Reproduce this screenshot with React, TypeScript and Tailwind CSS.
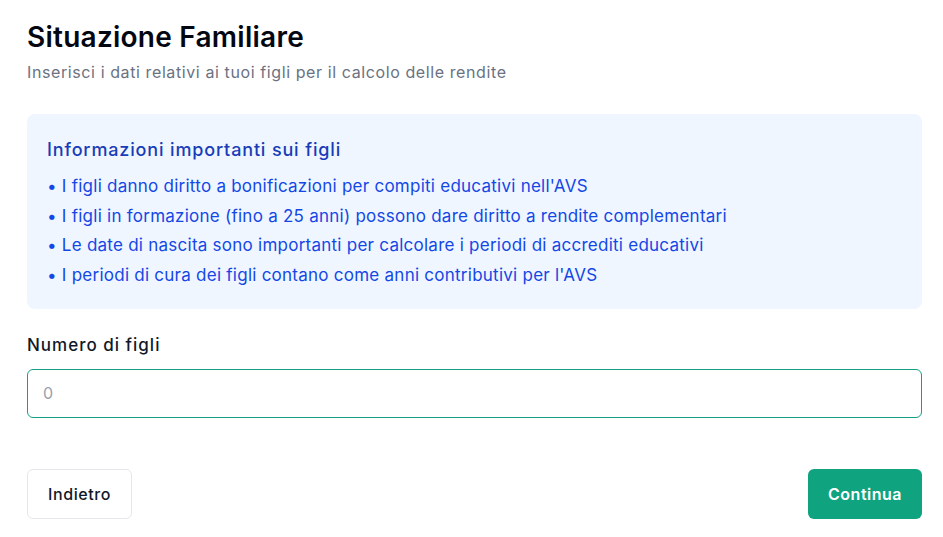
import { useState } from 'react';

const infos = [
  "I figli danno diritto a bonificazioni per compiti educativi nell'AVS",
  'I figli in formazione (fino a 25 anni) possono dare diritto a rendite complementari',
  'Le date di nascita sono importanti per calcolare i periodi di accrediti educativi',
  "I periodi di cura dei figli contano come anni contributivi per l'AVS",
];

const App = () => {
  const [children, setChildren] = useState('');

  return (
    <div
      className="min-h-screen bg-white pl-[27px] pr-[21px] pt-[19px]"
      style={{ fontFamily: 'Inter, "Noto Sans", sans-serif' }}
    >
      <h1 className="text-[28px] leading-9 font-semibold text-gray-950 tracking-[0.25px]">
        Situazione Familiare
      </h1>
      <p className="mt-[5px] text-base text-gray-500 tracking-[0.6px]">
        Inserisci i dati relativi ai tuoi figli per il calcolo delle rendite
      </p>

      {/* Info box */}
      <div className="mt-[30px] rounded-lg bg-blue-50 px-5 pt-[22px] pb-[18px]">
        <h3 className="text-lg font-medium text-blue-800 leading-7 tracking-[0.85px]">
          Informazioni importanti sui figli
        </h3>
        <ul className="mt-[8px] text-[17px] text-blue-700 tracking-[0.25px]">
          {infos.map(item => (
            <li key={item} className="leading-[29.7px]">
              • {item}
            </li>
          ))}
        </ul>
      </div>

      {/* Number of children */}
      <div className="mt-[24px]">
        <label className="block text-[17px] font-medium text-gray-900 leading-6 tracking-[1px]">
          Numero di figli
        </label>
        <input
          type="number"
          value={children}
          onChange={e => setChildren(e.target.value)}
          placeholder="0"
          className="mt-[12px] block w-full h-[49px] rounded-md border border-[#14a085] pl-[15px] pr-4 text-base text-gray-900 placeholder:text-gray-400 outline-none"
        />
      </div>

      <div className="mt-[51px] flex items-center justify-between">
        <button className="h-[50px] rounded-md border border-gray-200 bg-white px-5 text-base font-medium text-gray-900 tracking-[0.6px]">
          Indietro
        </button>
        <button className="h-[50px] rounded-md bg-[#10a37f] px-5 text-base font-semibold text-white tracking-[0.5px]">
          Continua
        </button>
      </div>
    </div>
  );
};

export default App;
